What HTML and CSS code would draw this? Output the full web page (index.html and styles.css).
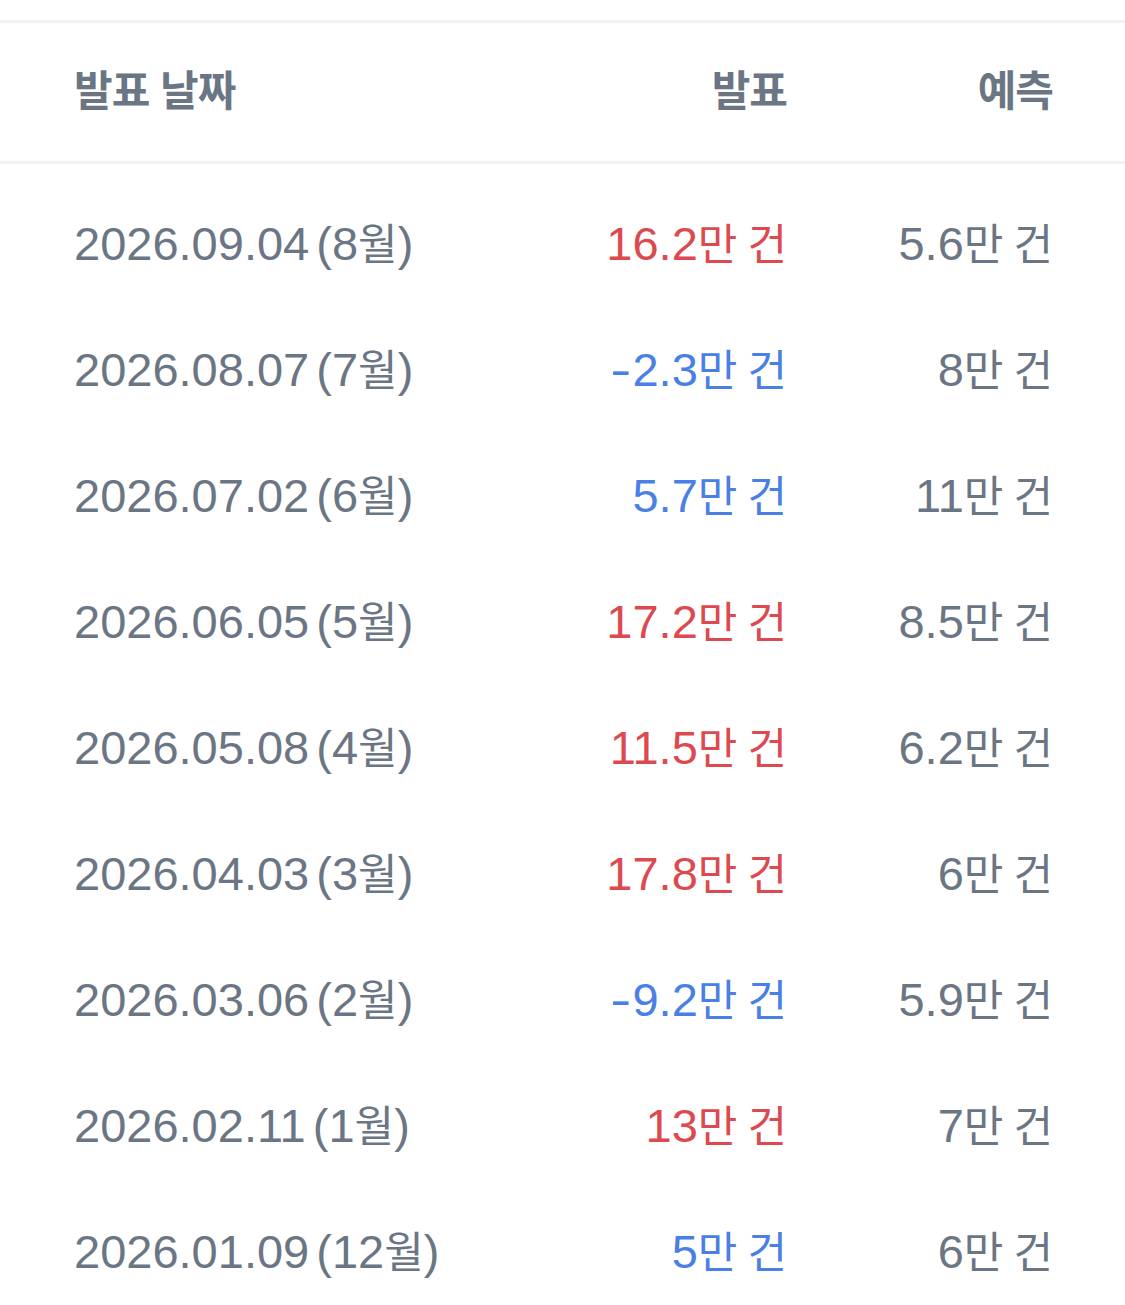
FILE: index.html
```html
<!DOCTYPE html>
<html lang="ko">
<head>
<meta charset="utf-8">
<link rel="stylesheet" href="styles.css">
</head>
<body>
<div class="page">
  <div class="table">
    <div class="row head">
      <div class="c date">발표 날짜</div>
      <div class="c num">발표</div>
      <div class="c num">예측</div>
    </div>
    <div class="body">
      <div class="row"><div class="c date">2026.09.04 (8<span class="k">월</span>)</div><div class="c num up">16.2<span class="k">만 건</span></div><div class="c num">5.6<span class="k">만 건</span></div></div>
      <div class="row"><div class="c date">2026.08.07 (7<span class="k">월</span>)</div><div class="c num down"><span class="minus">-</span>2.3<span class="k">만 건</span></div><div class="c num">8<span class="k">만 건</span></div></div>
      <div class="row"><div class="c date">2026.07.02 (6<span class="k">월</span>)</div><div class="c num down">5.7<span class="k">만 건</span></div><div class="c num">11<span class="k">만 건</span></div></div>
      <div class="row"><div class="c date">2026.06.05 (5<span class="k">월</span>)</div><div class="c num up">17.2<span class="k">만 건</span></div><div class="c num">8.5<span class="k">만 건</span></div></div>
      <div class="row"><div class="c date">2026.05.08 (4<span class="k">월</span>)</div><div class="c num up">11.5<span class="k">만 건</span></div><div class="c num">6.2<span class="k">만 건</span></div></div>
      <div class="row"><div class="c date">2026.04.03 (3<span class="k">월</span>)</div><div class="c num up">17.8<span class="k">만 건</span></div><div class="c num">6<span class="k">만 건</span></div></div>
      <div class="row"><div class="c date">2026.03.06 (2<span class="k">월</span>)</div><div class="c num down"><span class="minus">-</span>9.2<span class="k">만 건</span></div><div class="c num">5.9<span class="k">만 건</span></div></div>
      <div class="row"><div class="c date">2026.02.11 (1<span class="k">월</span>)</div><div class="c num up">13<span class="k">만 건</span></div><div class="c num">7<span class="k">만 건</span></div></div>
      <div class="row"><div class="c date">2026.01.09 (12<span class="k">월</span>)</div><div class="c num down">5<span class="k">만 건</span></div><div class="c num">6<span class="k">만 건</span></div></div>
    </div>
  </div>
</div>
</body>
</html>
```
FILE: styles.css
```css
html, body {
  margin: 0;
  padding: 0;
  background: #ffffff;
}
.page {
  padding-top: 20px;
  font-family: "Liberation Sans", "Noto Sans CJK KR", sans-serif;
  color: #6b7684;
}
.table {
  border-top: 3px solid #f2f3f5;
}
.row {
  display: grid;
  grid-template-columns: 1fr 250px 266px;
  align-items: center;
  padding: 0 72px 0 74px;
  height: 126px;
  box-sizing: border-box;
  font-size: 47px;
  word-spacing: -6px;
}
.row.head {
  height: 141px;
  padding-bottom: 10px;
  border-bottom: 3px solid #f2f3f5;
  font-family: "Noto Sans CJK KR", sans-serif;
  font-size: 42px;
  font-weight: 700;
  letter-spacing: -1px;
  word-spacing: 0;
}
.k {
  font-family: "Noto Sans CJK KR", sans-serif;
  font-size: 43px;
  word-spacing: -2px;
}
.minus {
  display: inline-block;
  transform: scaleX(1.35);
  margin-right: 4px;
}
.body {
  padding-top: 14px;
}
.c {
  white-space: nowrap;
}
.num {
  text-align: right;
}
.up {
  color: #dc4a4f;
}
.down {
  color: #4a80e6;
}
```
